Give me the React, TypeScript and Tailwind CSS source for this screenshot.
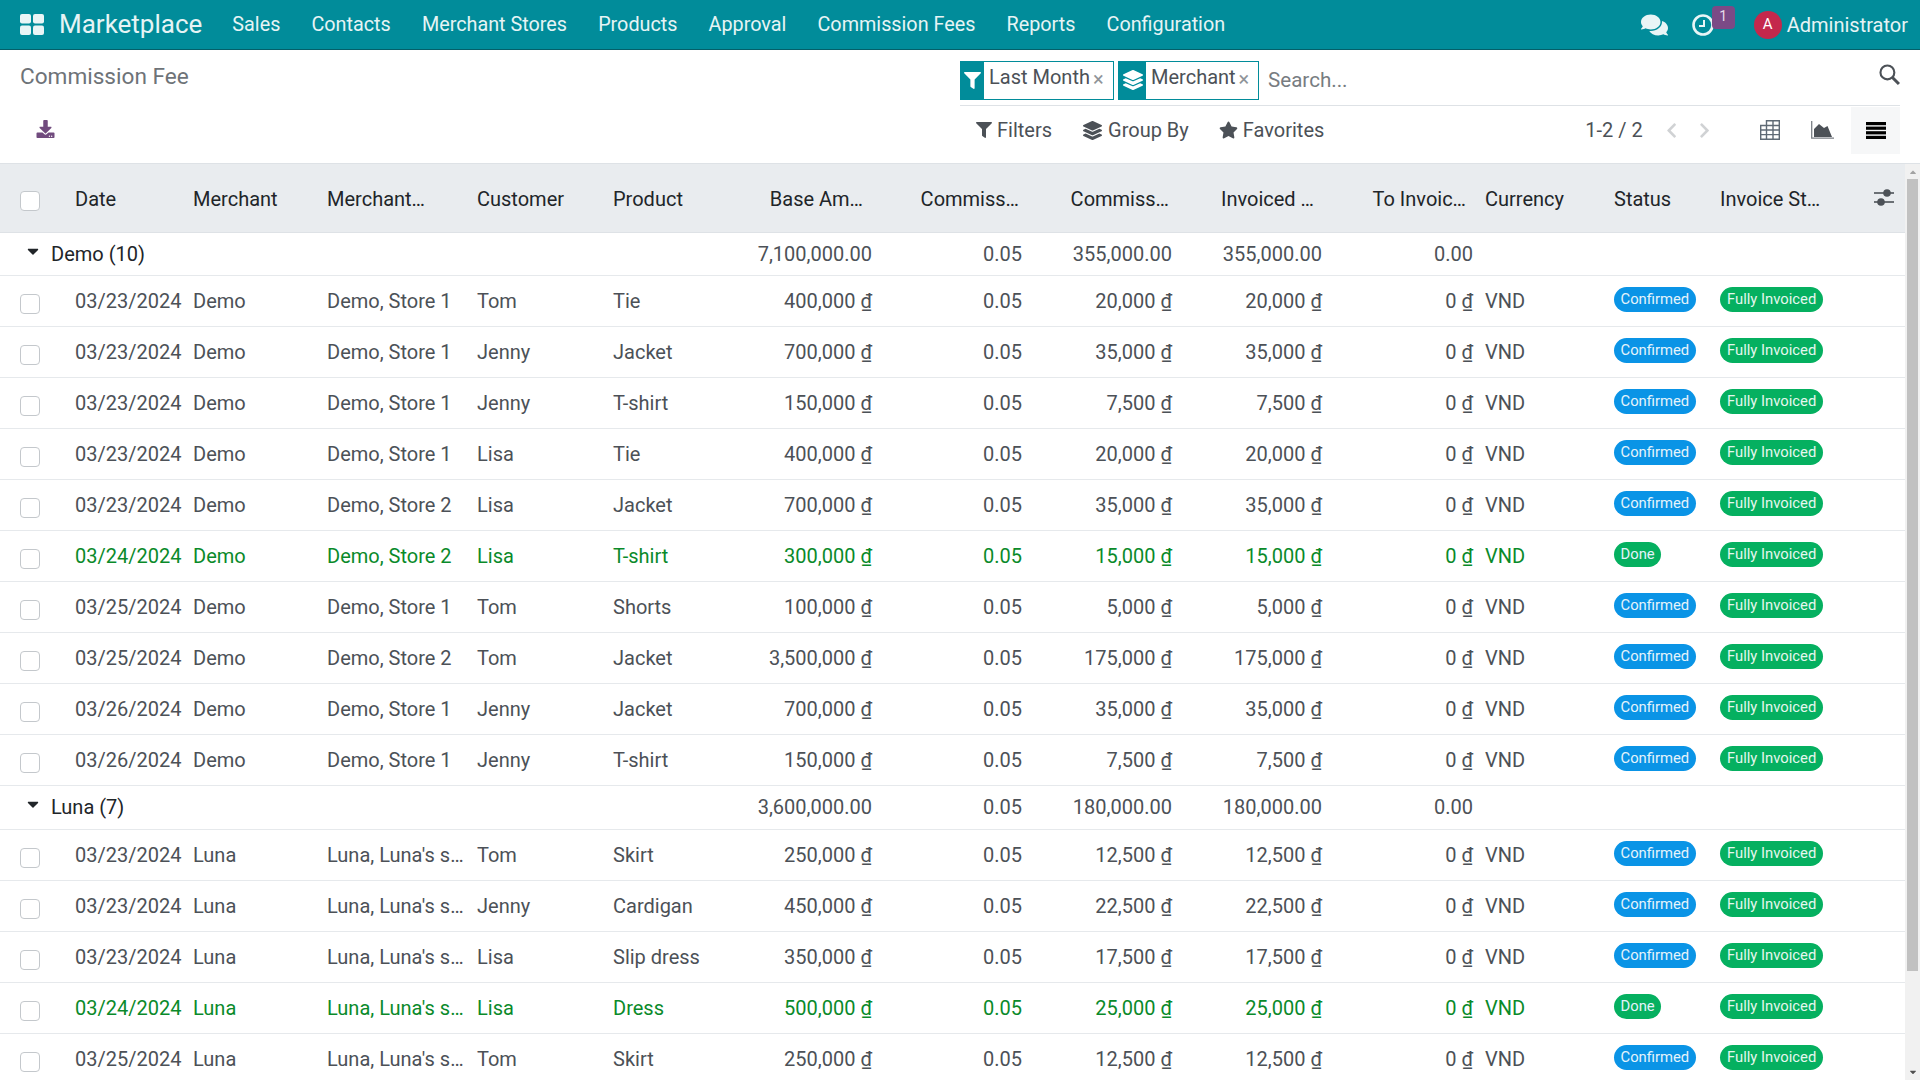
import React from "react";
import {
  FaComments,
  FaFilter,
  FaLayerGroup,
  FaStar,
  FaDownload,
  FaCaretDown,
  FaChevronLeft,
  FaChevronRight,
  FaCaretUp,
} from "react-icons/fa";

type Row = {
  date: string;
  merchant: string;
  store: string;
  customer: string;
  product: string;
  base: string;
  fee: string;
  status: "Confirmed" | "Done";
};

const menus = ["Sales", "Contacts", "Merchant Stores", "Products", "Approval", "Commission Fees", "Reports", "Configuration"];

const demoRows: Row[] = [
  { date: "03/23/2024", merchant: "Demo", store: "Demo, Store 1", customer: "Tom", product: "Tie", base: "400,000", fee: "20,000", status: "Confirmed" },
  { date: "03/23/2024", merchant: "Demo", store: "Demo, Store 1", customer: "Jenny", product: "Jacket", base: "700,000", fee: "35,000", status: "Confirmed" },
  { date: "03/23/2024", merchant: "Demo", store: "Demo, Store 1", customer: "Jenny", product: "T-shirt", base: "150,000", fee: "7,500", status: "Confirmed" },
  { date: "03/23/2024", merchant: "Demo", store: "Demo, Store 1", customer: "Lisa", product: "Tie", base: "400,000", fee: "20,000", status: "Confirmed" },
  { date: "03/23/2024", merchant: "Demo", store: "Demo, Store 2", customer: "Lisa", product: "Jacket", base: "700,000", fee: "35,000", status: "Confirmed" },
  { date: "03/24/2024", merchant: "Demo", store: "Demo, Store 2", customer: "Lisa", product: "T-shirt", base: "300,000", fee: "15,000", status: "Done" },
  { date: "03/25/2024", merchant: "Demo", store: "Demo, Store 1", customer: "Tom", product: "Shorts", base: "100,000", fee: "5,000", status: "Confirmed" },
  { date: "03/25/2024", merchant: "Demo", store: "Demo, Store 2", customer: "Tom", product: "Jacket", base: "3,500,000", fee: "175,000", status: "Confirmed" },
  { date: "03/26/2024", merchant: "Demo", store: "Demo, Store 1", customer: "Jenny", product: "Jacket", base: "700,000", fee: "35,000", status: "Confirmed" },
  { date: "03/26/2024", merchant: "Demo", store: "Demo, Store 1", customer: "Jenny", product: "T-shirt", base: "150,000", fee: "7,500", status: "Confirmed" },
];

const lunaRows: Row[] = [
  { date: "03/23/2024", merchant: "Luna", store: "Luna, Luna's s…", customer: "Tom", product: "Skirt", base: "250,000", fee: "12,500", status: "Confirmed" },
  { date: "03/23/2024", merchant: "Luna", store: "Luna, Luna's s…", customer: "Jenny", product: "Cardigan", base: "450,000", fee: "22,500", status: "Confirmed" },
  { date: "03/23/2024", merchant: "Luna", store: "Luna, Luna's s…", customer: "Lisa", product: "Slip dress", base: "350,000", fee: "17,500", status: "Confirmed" },
  { date: "03/24/2024", merchant: "Luna", store: "Luna, Luna's s…", customer: "Lisa", product: "Dress", base: "500,000", fee: "25,000", status: "Done" },
  { date: "03/25/2024", merchant: "Luna", store: "Luna, Luna's s…", customer: "Tom", product: "Skirt", base: "250,000", fee: "12,500", status: "Confirmed" },
];

const Checkbox = () => (
  <span className="block w-[20px] h-[20px] ml-[20px] mt-[6px] rounded-[4px] border border-[#c4c8cc] bg-white" />
);

const ClockIcon = () => (
  <svg viewBox="0 0 22 22" className="w-[22px] h-[22px]" fill="none" stroke="#e9f5f6">
    <circle cx="11" cy="11" r="9.5" strokeWidth="2.6" />
    <path d="M12 6v6H7" strokeWidth="2" />
  </svg>
);

const SearchIcon = () => (
  <svg viewBox="0 0 20 20" className="w-[21px] h-[21px]" fill="none" stroke="#4c5157">
    <circle cx="8" cy="8" r="6.6" strokeWidth="2" />
    <path d="M12.8 12.8L19 19" strokeWidth="2.8" />
  </svg>
);

const PivotIcon = () => (
  <svg viewBox="0 0 20 20" className="w-[20px] h-[20px]" fill="none" stroke="#5f6a75" strokeWidth="1.4">
    <path d="M6.5 5.5V.7h12.8v18.6H.7V5.5h18.6" />
    <path d="M.7 10h18.6M.7 14.6h18.6M6.5 5.5v13.8M13 .7v18.6" />
  </svg>
);

const AreaIcon = () => (
  <svg viewBox="0 0 23 18" className="w-[23px] h-[18px]">
    <path d="M.7 0v17.2H23" fill="none" stroke="#7a7f85" strokeWidth="1.3" />
    <path d="M3 16V8l5-5 5 4 3.5-2 4.5 11z" fill="#4c5157" />
  </svg>
);

const BarsIcon = () => (
  <svg viewBox="0 0 20 17" className="w-[20px] h-[17px]" fill="#000">
    <rect y="0" width="20" height="3.2" />
    <rect y="4.6" width="20" height="3.2" />
    <rect y="9.2" width="20" height="3.2" />
    <rect y="13.8" width="20" height="3.2" />
  </svg>
);

const SliderIcon = () => (
  <svg viewBox="0 0 20 17" className="ml-[14px] w-[20px] h-[17px]" fill="#4c5157">
    <rect y="3.2" width="20" height="1.6" />
    <rect y="12.2" width="20" height="1.6" />
    <circle cx="13" cy="4" r="3.8" />
    <circle cx="7" cy="13" r="3.8" />
  </svg>
);

const GroupRow = ({ label, base, fee, height }: { label: string; base: string; fee: string; height: string }) => (
  <tr className={`border-b border-[#e6e9ec] ${height}`}>
    <td colSpan={6} className="p-0">
      <div className="flex items-center text-[#212529]">
        <FaCaretDown className="ml-[24px] mb-[6px] w-[18px] h-[18px] text-[#212529]" />
        <span className="ml-[9px]">{label}</span>
      </div>
    </td>
    <td className="px-[6px] text-right">{base}</td>
    <td className="px-[6px] text-right">0.05</td>
    <td className="px-[6px] text-right">{fee}</td>
    <td className="px-[6px] text-right">{fee}</td>
    <td className="px-[6px] text-right">0.00</td>
    <td colSpan={4} />
  </tr>
);

const DataRow = ({ row }: { row: Row }) => {
  const done = row.status === "Done";
  return (
    <tr className={`h-[51px] border-b border-[#e6e9ec] ${done ? "text-[#0a8a2a]" : "text-[#4c5157]"}`}>
      <td className="p-0">
        <Checkbox />
      </td>
      <td className="px-[6px] whitespace-nowrap">{row.date}</td>
      <td className="px-[6px]">{row.merchant}</td>
      <td className="px-[6px] whitespace-nowrap">{row.store}</td>
      <td className="px-[6px]">{row.customer}</td>
      <td className="px-[6px] whitespace-nowrap">{row.product}</td>
      <td className="px-[6px] text-right whitespace-nowrap">{row.base} ₫</td>
      <td className="px-[6px] text-right">0.05</td>
      <td className="px-[6px] text-right whitespace-nowrap">{row.fee} ₫</td>
      <td className="px-[6px] text-right whitespace-nowrap">{row.fee} ₫</td>
      <td className="px-[6px] text-right whitespace-nowrap">0 ₫</td>
      <td className="px-[6px]">VND</td>
      <td className="px-[6px]">
        <span
          className={`flex items-center justify-center w-fit h-[25px] mb-[3px] rounded-full px-[6.5px] text-[14.8px] text-[#e4f3fb] ${
            done ? "bg-[#05b060]" : "bg-[#0a94e6]"
          }`}
        >
          {row.status}
        </span>
      </td>
      <td className="px-[6px]">
        <span className="flex items-center justify-center w-fit h-[25px] mb-[3px] rounded-full px-[7px] text-[14.8px] text-[#e4f7ee] bg-[#05b060] whitespace-nowrap">
          Fully Invoiced
        </span>
      </td>
      <td />
    </tr>
  );
};

const Facet = ({ icon, label, width, iconWidth }: { icon: React.ReactNode; label: string; width: string; iconWidth: string }) => (
  <div className={`flex h-[39px] border border-[#018c9a] ${width}`}>
    <div className={`flex items-center justify-center bg-[#018c9a] text-white ${iconWidth}`}>{icon}</div>
    <div className="flex flex-1 items-start pl-[5px] text-[#4c5157]">
      <span className="whitespace-nowrap">{label}</span>
      <span className="ml-[3px] mt-[4px] text-[#8f9499] text-[20px] leading-[26px]">×</span>
    </div>
  </div>
);

export default function App() {
  return (
    <div className="h-screen overflow-hidden bg-white font-['Roboto',sans-serif] text-[20px] text-[#4c5157]">
      {/* top navbar */}
      <nav className="flex items-center h-[50px] bg-[#018c9a] border-b border-[#045f69] text-[#e6f4f5]">
        <svg viewBox="0 0 24 21" className="ml-[20px] w-[24px] h-[21px]" fill="#e9f5f6">
          <rect x="0" y="0" width="11" height="9.5" rx="2" />
          <rect x="13" y="0" width="11" height="9.5" rx="2" />
          <rect x="0" y="11.5" width="11" height="9.5" rx="2" />
          <rect x="13" y="11.5" width="11" height="9.5" rx="2" />
        </svg>
        <span className="ml-[15px] text-[26px]">Marketplace</span>
        <div className="flex ml-[30px] pt-[1px] gap-[31.1px] text-[19.8px]">
          {menus.map((m) => (
            <span key={m} className="whitespace-nowrap">
              {m}
            </span>
          ))}
        </div>
        <div className="flex items-center ml-auto pr-[12px]">
          <FaComments className="w-[27px] h-[24px] text-[#e9f5f6]" />
          <div className="relative ml-[24px]">
            <ClockIcon />
            <span className="absolute left-[20px] top-[-8px] flex items-start justify-center w-[23px] h-[23px] rounded-[4px] bg-[#7b4a86] text-[14px] leading-[20px] text-[#e6dcea]">
              1
            </span>
          </div>
          <span className="flex items-center justify-center ml-[40px] w-[28px] h-[28px] rounded-full bg-[#c4284c] text-[15px] text-white">
            A
          </span>
          <span className="ml-[5px] whitespace-nowrap">Administrator</span>
        </div>
      </nav>

      {/* control panel */}
      <div className="flex h-[114px] border-b border-[#dee2e6]">
        <div className="w-[960px] shrink-0 pl-[20px]">
          <div className="pt-[12px] text-[22.6px] leading-[30px] text-[#6e7378]">Commission Fee</div>
          <FaDownload className="ml-[16px] mt-[28px] w-[19px] h-[18px] text-[#714b7e]" />
        </div>
        <div className="flex flex-col w-[940px]">
          <div className="flex items-center h-[56px] pt-[10px] pb-[5px] border-b border-[#dee2e6]">
            <Facet icon={<FaFilter className="w-[17px] h-[17px]" />} label="Last Month" width="w-[154px]" iconWidth="w-[23px]" />
            <div className="w-[4px]" />
            <Facet icon={<FaLayerGroup className="w-[20px] h-[20px]" />} label="Merchant" width="w-[141px]" iconWidth="w-[27px]" />
            <span className="ml-[9px] text-[20.6px] text-[#777c81]">Search...</span>
            <div className="ml-auto mb-[11px]">
              <SearchIcon />
            </div>
          </div>
          <div className="flex items-center h-[48px] text-[#4c5157]">
            <div className="flex items-center ml-[16px] whitespace-nowrap">
              <FaFilter className="w-[16px] h-[16px]" />
              <span className="ml-[5px]">Filters</span>
            </div>
            <div className="flex items-center ml-[31px] whitespace-nowrap">
              <FaLayerGroup className="w-[19px] h-[19px]" />
              <span className="ml-[6px]">Group By</span>
            </div>
            <div className="flex items-center ml-[30px] whitespace-nowrap">
              <FaStar className="w-[19px] h-[18px]" />
              <span className="ml-[5px]">Favorites</span>
            </div>
            <span className="ml-[261px] whitespace-nowrap">1-2 / 2</span>
            <FaChevronLeft className="ml-[22px] w-[14px] h-[17px] text-[#d0d2d4]" />
            <FaChevronRight className="ml-[20px] w-[14px] h-[17px] text-[#d0d2d4]" />
            <div className="ml-[49px]">
              <PivotIcon />
            </div>
            <div className="ml-[31px]">
              <AreaIcon />
            </div>
            <div className="flex items-center justify-center ml-[17px] w-[52px] h-[47px] bg-[#f6f7f8]">
              <BarsIcon />
            </div>
          </div>
        </div>
      </div>

      {/* list + scrollbar */}
      <div className="flex h-[916px]">
        <div className="w-[1905px] shrink-0 overflow-hidden">
          <table className="table-fixed w-[1905px] border-collapse">
            <colgroup>
              <col className="w-[69px]" />
              <col className="w-[118px]" />
              <col className="w-[134px]" />
              <col className="w-[150px]" />
              <col className="w-[136px]" />
              <col className="w-[133px]" />
              <col className="w-[138px]" />
              <col className="w-[150px]" />
              <col className="w-[150px]" />
              <col className="w-[150px]" />
              <col className="w-[151px]" />
              <col className="w-[129px]" />
              <col className="w-[106px]" />
              <col className="w-[146px]" />
              <col className="w-[45px]" />
            </colgroup>
            <thead>
              <tr className="h-[68px] bg-[#e9ecef] border-b border-[#dee2e6] text-[#212529] font-normal">
                <th className="p-0 font-normal">
                  <Checkbox />
                </th>
                <th className="px-[6px] pt-[2px] font-normal text-left">Date</th>
                <th className="px-[6px] pt-[2px] font-normal text-left">Merchant</th>
                <th className="px-[6px] pt-[2px] font-normal text-left">Merchant…</th>
                <th className="px-[6px] pt-[2px] font-normal text-left">Customer</th>
                <th className="px-[6px] pt-[2px] font-normal text-left">Product</th>
                <th className="pl-[6px] pr-[15px] pt-[2px] font-normal text-right">Base Am…</th>
                <th className="pl-[6px] pr-[9px] pt-[2px] font-normal text-right">Commiss…</th>
                <th className="pl-[6px] pr-[9px] pt-[2px] font-normal text-right">Commiss…</th>
                <th className="pl-[6px] pr-[14px] pt-[2px] font-normal text-right whitespace-nowrap">Invoiced …</th>
                <th className="pl-[6px] pr-[13px] pt-[2px] font-normal text-right whitespace-nowrap">To Invoic…</th>
                <th className="px-[6px] pt-[2px] font-normal text-left">Currency</th>
                <th className="px-[6px] pt-[2px] font-normal text-left">Status</th>
                <th className="px-[6px] pt-[2px] font-normal text-left whitespace-nowrap">Invoice St…</th>
                <th className="p-0 font-normal">
                  <SliderIcon />
                </th>
              </tr>
            </thead>
            <tbody>
              <GroupRow label="Demo (10)" base="7,100,000.00" fee="355,000.00" height="h-[43px]" />
              {demoRows.map((r, i) => (
                <DataRow key={i} row={r} />
              ))}
              <GroupRow label="Luna (7)" base="3,600,000.00" fee="180,000.00" height="h-[44px]" />
              {lunaRows.map((r, i) => (
                <DataRow key={i} row={r} />
              ))}
            </tbody>
          </table>
        </div>
        <div className="flex flex-col items-center w-[15px] bg-[#f1f1f1]">
          <FaCaretUp className="mt-[3px] w-[10px] h-[10px] text-[#a3a3a3]" />
          <div className="mt-[2px] w-[11px] h-[792px] bg-[#c1c1c1]" />
          <FaCaretDown className="mt-auto mb-[3px] w-[10px] h-[10px] text-[#505050]" />
        </div>
      </div>
    </div>
  );
}
